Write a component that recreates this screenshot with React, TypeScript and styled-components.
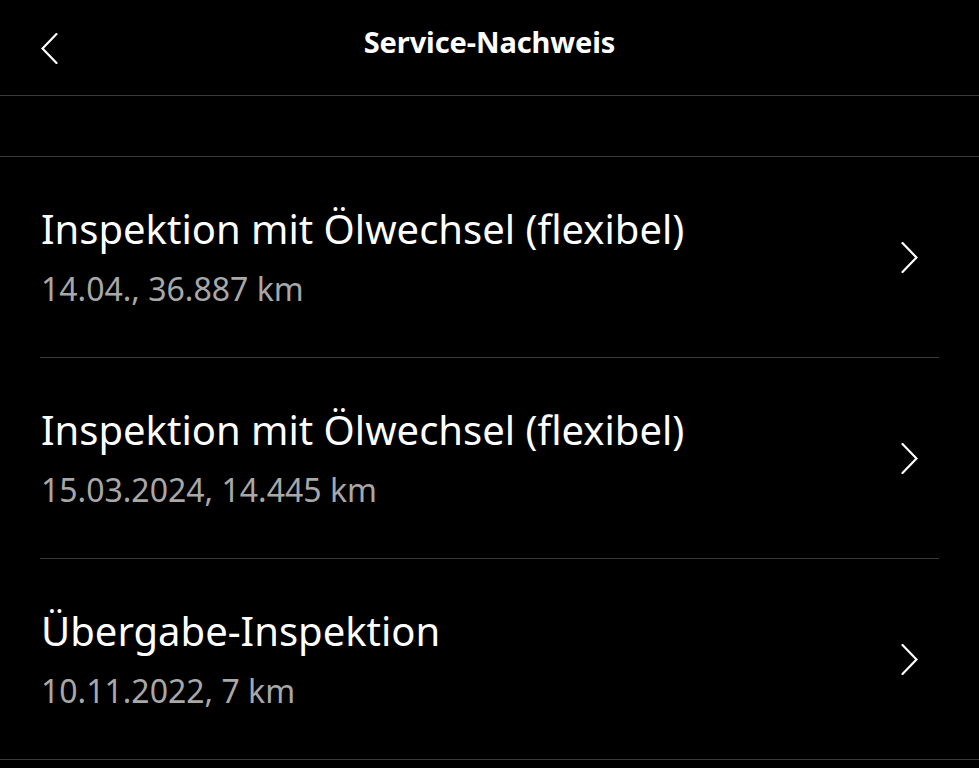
import styled, { createGlobalStyle } from 'styled-components'

const GlobalStyle = createGlobalStyle`
  html, body {
    margin: 0;
    padding: 0;
    background: #000;
  }
  body {
    font-family: 'Noto Sans', 'Open Sans', sans-serif;
    color: #fff;
  }
`

interface Entry {
  id: number
  title: string
  detail: string
}

const entries: Entry[] = [
  { id: 1, title: 'Inspektion mit Ölwechsel (flexibel)', detail: '14.04., 36.887 km' },
  { id: 2, title: 'Inspektion mit Ölwechsel (flexibel)', detail: '15.03.2024, 14.445 km' },
  { id: 3, title: 'Übergabe-Inspektion', detail: '10.11.2022, 7 km' },
]

function Chevron(props: { left?: boolean }) {
  return (
    <svg width="17" height="31" viewBox="0 0 17 31" fill="none">
      <path
        d={props.left ? 'M15.5 1 L1.5 15.5 L15.5 30' : 'M1.5 1 L15.5 15.5 L1.5 30'}
        stroke="#fff"
        strokeWidth="2.2"
        strokeLinecap="round"
        strokeLinejoin="miter"
      />
    </svg>
  )
}

export default function App() {
  return (
    <Page>
      <GlobalStyle />
      <Header>
        <BackButton>
          <Chevron left />
        </BackButton>
        <HeaderTitle>Service-Nachweis</HeaderTitle>
      </Header>
      <Spacer />
      <List>
        {entries.map((entry) => (
          <ServiceRow key={entry.id}>
            <Texts>
              <Title>{entry.title}</Title>
              <Detail>{entry.detail}</Detail>
            </Texts>
            <Chevron />
          </ServiceRow>
        ))}
      </List>
    </Page>
  )
}

const Page = styled.div`
  width: 979px;
  height: 768px;
  background: #000;
  overflow: hidden;
`
const Header = styled.header`
  position: relative;
  height: 95px;
  display: flex;
  justify-content: center;
  border-bottom: 1px solid #3a3a3a;
`
const BackButton = styled.div`
  position: absolute;
  left: 41px;
  top: 33px;
  display: flex;
`
const HeaderTitle = styled.h1`
  margin: 22px 0 0;
  font-size: 29px;
  font-weight: 700;
  line-height: 40px;
  letter-spacing: -0.1px;
`
const Spacer = styled.div`
  height: 60px;
  border-bottom: 1px solid #3a3a3a;
`
const List = styled.div`
  border-bottom: 1px solid #3a3a3a;
`
const ServiceRow = styled.div`
  margin: 0 40px;
  height: 200px;
  display: flex;
  align-items: center;
  justify-content: space-between;
  padding-left: 1px;
  padding-right: 21px;
  border-bottom: 1px solid #3a3a3a;
  &:last-child {
    border-bottom: none;
  }
`
const Texts = styled.div`
  display: flex;
  flex-direction: column;
  gap: 16px;
`
const Title = styled.div`
  font-size: 40px;
  line-height: 48px;
`
const Detail = styled.div`
  font-size: 32px;
  line-height: 40px;
  color: #a8a8a8;
`
